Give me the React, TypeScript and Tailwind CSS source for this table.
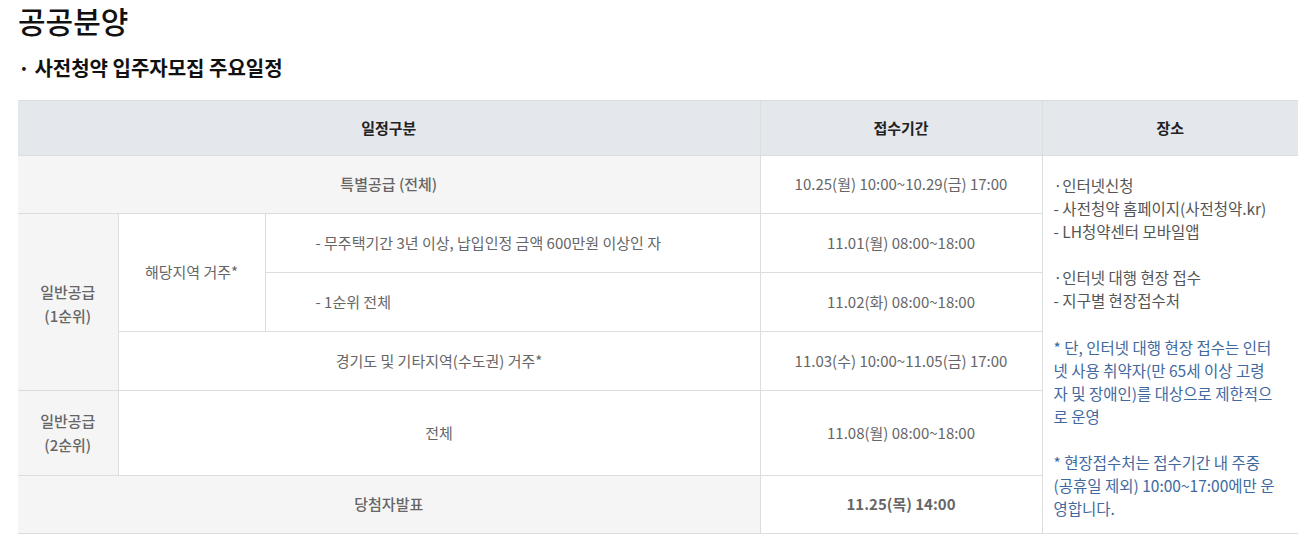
import React from 'react';

const font = { fontFamily: '"Noto Sans CJK KR", "Noto Sans", sans-serif' };

export default function App() {
  const td = 'border border-[#dddddd] text-center align-middle text-[15px] text-[#666]';
  const label = 'bg-[#f5f5f5] font-medium text-[#444] border-l-0';
  return (
    <div className="bg-white w-[1306px] h-[542px] overflow-hidden px-[18px]" style={font}>
      <h1 className="text-[30px] leading-[40px] font-medium text-[#111]">공공분양</h1>
      <h2 className="mt-[15px] text-[20px] leading-[26px] font-bold text-[#111]">· 사전청약 입주자모집 주요일정</h2>

      <table className="mt-[19px] w-[1280px] border-collapse table-fixed">
        <colgroup>
          <col className="w-[100px]" />
          <col className="w-[147px]" />
          <col className="w-[495px]" />
          <col className="w-[282px]" />
          <col className="w-[256px]" />
        </colgroup>
        <thead>
          <tr className="h-[55px] bg-[#e4e7ec]">
            <th colSpan={3} className="border-y border-[#dddddd] border-r text-[15px] font-bold text-[#222]">일정구분</th>
            <th className="border border-[#dddddd] text-[15px] font-bold text-[#222]">접수기간</th>
            <th className="border-y border-l border-[#dddddd] text-[15px] font-bold text-[#222]">장소</th>
          </tr>
        </thead>
        <tbody>
          <tr className="h-[58px]">
            <td colSpan={3} className={`${td} ${label}`}>특별공급 (전체)</td>
            <td className={td}>10.25(월) 10:00~10.29(금) 17:00</td>
            <td rowSpan={6} className="border border-[#dddddd] border-r-0 align-top text-left text-[15.5px] leading-[23.1px] pl-[11px] pr-[8px] pt-[18px] whitespace-nowrap">
              <div className="text-[#555]">
                <p>·인터넷신청</p>
                <p>- 사전청약 홈페이지(사전청약.kr)</p>
                <p>- LH청약센터 모바일앱</p>
                <p className="mt-[23.1px]">·인터넷 대행 현장 접수</p>
                <p>- 지구별 현장접수처</p>
              </div>
              <div className="text-[#41699f] mt-[23.1px]">
                <p>* 단, 인터넷 대행 현장 접수는 인터<br />넷 사용 취약자(만 65세 이상 고령<br />자 및 장애인)를 대상으로 제한적으<br />로 운영</p>
                <p className="mt-[23.1px]">* 현장접수처는 접수기간 내 주중<br />(공휴일 제외) 10:00~17:00에만 운<br />영합니다.</p>
              </div>
            </td>
          </tr>
          <tr className="h-[59px]">
            <td rowSpan={3} className={`${td} ${label} leading-[24px] pt-[4px]`}>일반공급<br />(1순위)</td>
            <td rowSpan={2} className={td}>해당지역 거주*</td>
            <td className={`${td} text-left pl-[50px]`}>- 무주택기간 3년 이상, 납입인정 금액 600만원 이상인 자</td>
            <td className={td}>11.01(월) 08:00~18:00</td>
          </tr>
          <tr className="h-[59px]">
            <td className={`${td} text-left pl-[50px]`}>- 1순위 전체</td>
            <td className={td}>11.02(화) 08:00~18:00</td>
          </tr>
          <tr className="h-[59px]">
            <td colSpan={2} className={td}>경기도 및 기타지역(수도권) 거주*</td>
            <td className={td}>11.03(수) 10:00~11.05(금) 17:00</td>
          </tr>
          <tr className="h-[85px]">
            <td className={`${td} ${label} leading-[24px]`}>일반공급<br />(2순위)</td>
            <td colSpan={2} className={td}>전체</td>
            <td className={td}>11.08(월) 08:00~18:00</td>
          </tr>
          <tr className="h-[58px]">
            <td colSpan={3} className={`${td} ${label}`}>당첨자발표</td>
            <td className={`${td} font-bold text-[#111]`}>11.25(목) 14:00</td>
          </tr>
        </tbody>
      </table>
    </div>
  );
}
